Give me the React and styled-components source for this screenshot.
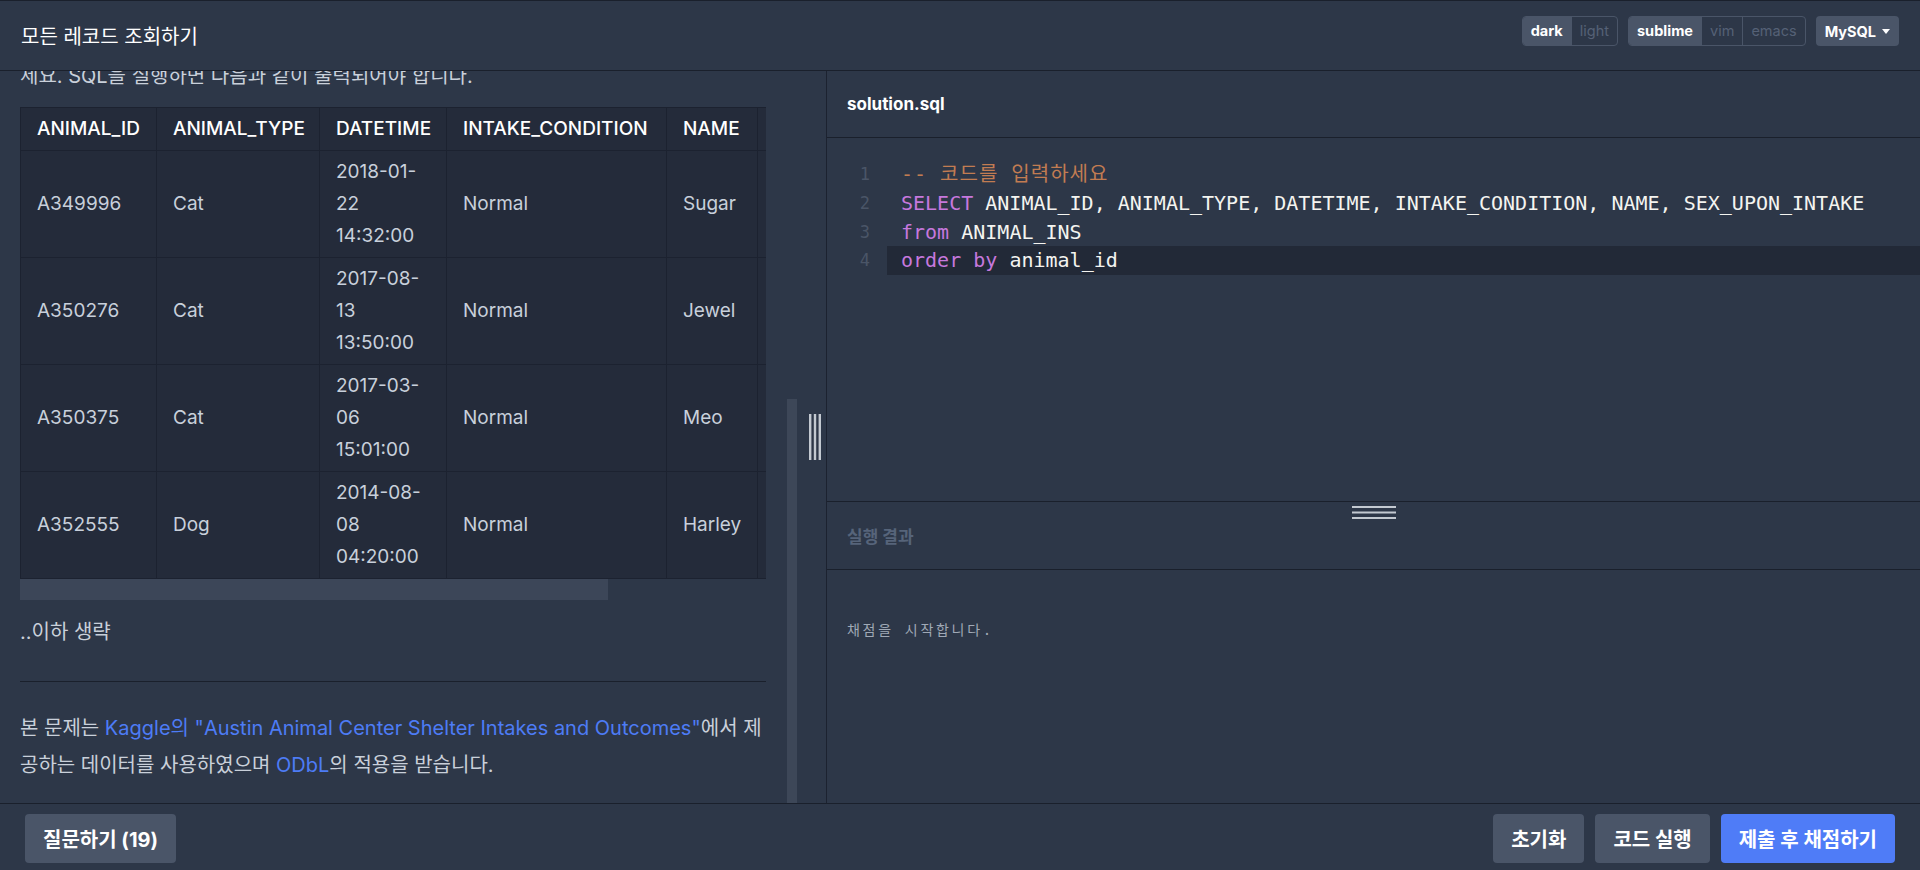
import React from "react";
import styled, { createGlobalStyle } from "styled-components";

const GlobalStyle = createGlobalStyle`
  html, body {
    margin: 0;
    padding: 0;
    background: #2d3748;
  }
  body {
    font-family: Inter, "Noto Sans CJK KR", sans-serif;
    color: #cbd2dc;
  }
  * {
    box-sizing: border-box;
  }
`;

const Page = styled.div`
  width: 1920px;
  height: 870px;
  display: flex;
  flex-direction: column;
  background: #2d3748;
  overflow: hidden;
`;

// ---- header ----
const Header = styled.header`
  height: 71px;
  flex: none;
  display: flex;
  align-items: center;
  justify-content: space-between;
  padding: 0 21px;
  border-top: 1px solid #1a202c;
  border-bottom: 1px solid #1a202c;
`;

const Title = styled.h1`
  margin: 0;
  font-size: 20px;
  font-weight: 400;
  color: #ffffff;
`;

const Controls = styled.div`
  align-self: flex-start;
  margin-top: 15px;
  display: flex;
  gap: 10px;
`;

const ToggleGroup = styled.div`
  display: flex;
  height: 30px;
  border: 1px solid #4a5568;
  border-radius: 4px;
  overflow: hidden;
`;

const Segment = styled.span`
  padding: 0 8px;
  line-height: 28px;
  font-size: 14.5px;
  font-weight: ${(p) => (p.active ? 700 : 400)};
  color: ${(p) => (p.active ? "#ffffff" : "#556176")};
  background: ${(p) => (p.active ? "#4a5568" : "transparent")};
  & + & {
    border-left: 1px solid #4a5568;
  }
`;

const Dropdown = styled.div`
  display: flex;
  align-items: center;
  gap: 6px;
  height: 30px;
  padding: 0 9px;
  border-radius: 4px;
  background: #4a5568;
  color: #ffffff;
  font-size: 14.5px;
  font-weight: 700;
  &::after {
    content: "";
    border-left: 4px solid transparent;
    border-right: 4px solid transparent;
    border-top: 5px solid #ffffff;
  }
`;

// ---- main ----
const Main = styled.div`
  flex: 1;
  min-height: 0;
  display: flex;
`;

const LeftPane = styled.section`
  width: 827px;
  flex: none;
  display: flex;
  border-right: 1px solid #1c2230;
`;

const ScrollArea = styled.div`
  position: relative;
  width: 797px;
  flex: none;
  overflow: hidden;
  display: flex;
  flex-direction: column;
  justify-content: flex-end;
`;

const Content = styled.div`
  padding: 0 31px 19px 20px;
`;

const ScrollThumb = styled.div`
  position: absolute;
  right: 0;
  top: 328px;
  bottom: 0;
  width: 10px;
  background: #3d4758;
`;

const Para = styled.p`
  margin: 0 0 ${(p) => p.mb || 0}px;
  font-size: 20px;
  line-height: 37px;
  color: #c9d0da;
`;

const Link = styled.a`
  color: #4d7cf6;
  text-decoration: none;
`;

const TableWrap = styled.div`
  width: 100%;
  overflow: hidden;
`;

const Table = styled.table`
  width: 946px;
  table-layout: fixed;
  border-collapse: collapse;
  background: #242b3a;
  font-size: 19px;
  line-height: 32px;
`;

const Th = styled.th`
  padding: 5px 16px;
  border: 1px solid #1c2230;
  text-align: left;
  font-weight: 500;
  color: #ffffff;
`;

const Td = styled.td`
  padding: 5px 16px;
  border: 1px solid #1c2230;
  text-align: left;
  vertical-align: middle;
  color: #c8d0db;
`;

const HScroll = styled.div`
  height: 21px;
  margin-bottom: 14px;
`;

const HThumb = styled.div`
  height: 100%;
  width: ${(p) => p.ratio * 100}%;
  background: #3c4658;
`;

const Rule = styled.hr`
  margin: 30px 0 28px;
  border: none;
  border-top: 1px solid #1a202c;
`;

const Gutter = styled.div`
  flex: 1;
  display: flex;
  align-items: center;
  justify-content: center;
  padding-left: 7px;
`;

// ---- right ----
const RightPane = styled.section`
  flex: 1;
  display: flex;
  flex-direction: column;
`;

const EditorTab = styled.div`
  height: 67px;
  flex: none;
  display: flex;
  align-items: center;
  padding-left: 20px;
  border-bottom: 1px solid #1a202c;
  font-size: 17px;
  font-weight: 700;
  color: #ffffff;
`;

const CodeArea = styled.div`
  flex: 1;
  padding-top: 22px;
  border-bottom: 1px solid #1a202c;
  font-family: "DejaVu Sans Mono", "Noto Sans Mono CJK KR", "Noto Sans CJK KR", monospace;
`;

const CodeLine = styled.div`
  display: flex;
  height: 28.8px;
  line-height: 28.8px;
`;

const LineNo = styled.span`
  width: 60px;
  flex: none;
  padding-right: 17px;
  text-align: right;
  font-size: 17px;
  color: #4a5567;
`;

const LineText = styled.span`
  flex: 1;
  padding-left: 14px;
  font-size: 20px;
  white-space: pre;
  color: #f4f4f0;
  background: ${(p) => (p.active ? "#222937" : "transparent")};
`;

const Kw = styled.span`
  color: #c678dd;
`;

const Comment = styled.span`
  color: #c27c52;
  letter-spacing: 1px;
`;

const ResultHead = styled.div`
  position: relative;
  height: 68px;
  flex: none;
  display: flex;
  align-items: center;
  padding-left: 20px;
  border-bottom: 1px solid #1a202c;
  font-size: 17px;
  font-weight: 700;
  color: #56647a;
`;

const HHandle = styled.svg`
  position: absolute;
  top: 4px;
  left: 50%;
  margin-left: -22px;
`;

const Output = styled.div`
  height: 233px;
  flex: none;
  padding: 50px 20px 0;
  font-family: "DejaVu Sans Mono", "Noto Sans Mono CJK KR", "Noto Sans CJK KR", monospace;
  font-size: 14px;
  line-height: 21px;
  letter-spacing: 2.7px;
  color: #a0a9b6;
`;

// ---- bottom ----
const BottomBar = styled.footer`
  height: 67px;
  flex: none;
  display: flex;
  justify-content: space-between;
  align-items: flex-start;
  padding: 10px 25px 0;
  border-top: 1px solid #1a202c;
`;

const ButtonRow = styled.div`
  display: flex;
  gap: 11px;
`;

const Button = styled.button`
  height: 49px;
  padding: 0 18px;
  border: none;
  border-radius: 4px;
  background: ${(p) => (p.primary ? "#4f7cf7" : "#4a5568")};
  color: #ffffff;
  font-family: Inter, "Noto Sans CJK KR", sans-serif;
  font-size: 20px;
  font-weight: 700;
`;

const columns = [
  { key: "id", name: "ANIMAL_ID", width: 136 },
  { key: "type", name: "ANIMAL_TYPE", width: 163 },
  { key: "datetime", name: "DATETIME", width: 127 },
  { key: "condition", name: "INTAKE_CONDITION", width: 220 },
  { key: "name", name: "NAME", width: 91 },
  { key: "sex", name: "SEX_UPON_INTAKE", width: 209 },
];

const rows = [
  { id: "A349996", type: "Cat", datetime: "2018-01-22 14:32:00", condition: "Normal", name: "Sugar", sex: "Neutered Male" },
  { id: "A350276", type: "Cat", datetime: "2017-08-13 13:50:00", condition: "Normal", name: "Jewel", sex: "Spayed Female" },
  { id: "A350375", type: "Cat", datetime: "2017-03-06 15:01:00", condition: "Normal", name: "Meo", sex: "Neutered Male" },
  { id: "A352555", type: "Dog", datetime: "2014-08-08 04:20:00", condition: "Normal", name: "Harley", sex: "Spayed Female" },
];

const App = () => {
  return (
    <Page>
      <GlobalStyle />
      <Header>
        <Title>모든 레코드 조회하기</Title>
        <Controls>
          <ToggleGroup>
            <Segment active>dark</Segment>
            <Segment>light</Segment>
          </ToggleGroup>
          <ToggleGroup>
            <Segment active>sublime</Segment>
            <Segment>vim</Segment>
            <Segment>emacs</Segment>
          </ToggleGroup>
          <Dropdown>MySQL</Dropdown>
        </Controls>
      </Header>
      <Main>
        <LeftPane>
          <ScrollArea>
            <Content>
              <Para mb={12}>
                동물 보호소에 들어온 모든 동물의 정보를 ANIMAL_ID순으로 조회하는 SQL문을 작성해주
                <br />
                세요. SQL을 실행하면 다음과 같이 출력되어야 합니다.
              </Para>
              <TableWrap>
                <Table>
                  <colgroup>
                    {columns.map((c) => (
                      <col key={c.key} style={{ width: c.width }} />
                    ))}
                  </colgroup>
                  <thead>
                    <tr>
                      {columns.map((c) => (
                        <Th key={c.key}>{c.name}</Th>
                      ))}
                    </tr>
                  </thead>
                  <tbody>
                    {rows.map((r) => (
                      <tr key={r.id}>
                        {columns.map((c) => (
                          <Td key={c.key}>{r[c.key]}</Td>
                        ))}
                      </tr>
                    ))}
                  </tbody>
                </Table>
              </TableWrap>
              <HScroll>
                <HThumb ratio={588 / 746} />
              </HScroll>
              <Para>..이하 생략</Para>
              <Rule />
              <Para>
                본 문제는 <Link>Kaggle의 "Austin Animal Center Shelter Intakes and Outcomes"</Link>에서 제공하는
                데이터를 사용하였으며 <Link>ODbL</Link>의 적용을 받습니다.
              </Para>
            </Content>
            <ScrollThumb />
          </ScrollArea>
          <Gutter>
            <svg width="12" height="46" viewBox="0 0 12 46">
              <rect x="0" y="0" width="2.4" height="46" fill="#c3c9d1" />
              <rect x="4.8" y="0" width="2.4" height="46" fill="#c3c9d1" />
              <rect x="9.6" y="0" width="2.4" height="46" fill="#c3c9d1" />
            </svg>
          </Gutter>
        </LeftPane>
        <RightPane>
          <EditorTab>solution.sql</EditorTab>
          <CodeArea>
            <CodeLine>
              <LineNo>1</LineNo>
              <LineText>
                <Comment>-- 코드를 입력하세요</Comment>
              </LineText>
            </CodeLine>
            <CodeLine>
              <LineNo>2</LineNo>
              <LineText>
                <Kw>SELECT</Kw> ANIMAL_ID, ANIMAL_TYPE, DATETIME, INTAKE_CONDITION, NAME, SEX_UPON_INTAKE
              </LineText>
            </CodeLine>
            <CodeLine>
              <LineNo>3</LineNo>
              <LineText>
                <Kw>from</Kw> ANIMAL_INS
              </LineText>
            </CodeLine>
            <CodeLine>
              <LineNo>4</LineNo>
              <LineText active>
                <Kw>order</Kw> <Kw>by</Kw> animal_id
              </LineText>
            </CodeLine>
          </CodeArea>
          <ResultHead>
            <HHandle width="44" height="13" viewBox="0 0 44 13">
              <rect x="0" y="0" width="44" height="2" fill="#c3c9d1" />
              <rect x="0" y="5.5" width="44" height="2" fill="#c3c9d1" />
              <rect x="0" y="11" width="44" height="2" fill="#c3c9d1" />
            </HHandle>
            실행 결과
          </ResultHead>
          <Output>채점을 시작합니다.</Output>
        </RightPane>
      </Main>
      <BottomBar>
        <Button>질문하기 (19)</Button>
        <ButtonRow>
          <Button>초기화</Button>
          <Button>코드 실행</Button>
          <Button primary>제출 후 채점하기</Button>
        </ButtonRow>
      </BottomBar>
    </Page>
  );
};

export default App;
